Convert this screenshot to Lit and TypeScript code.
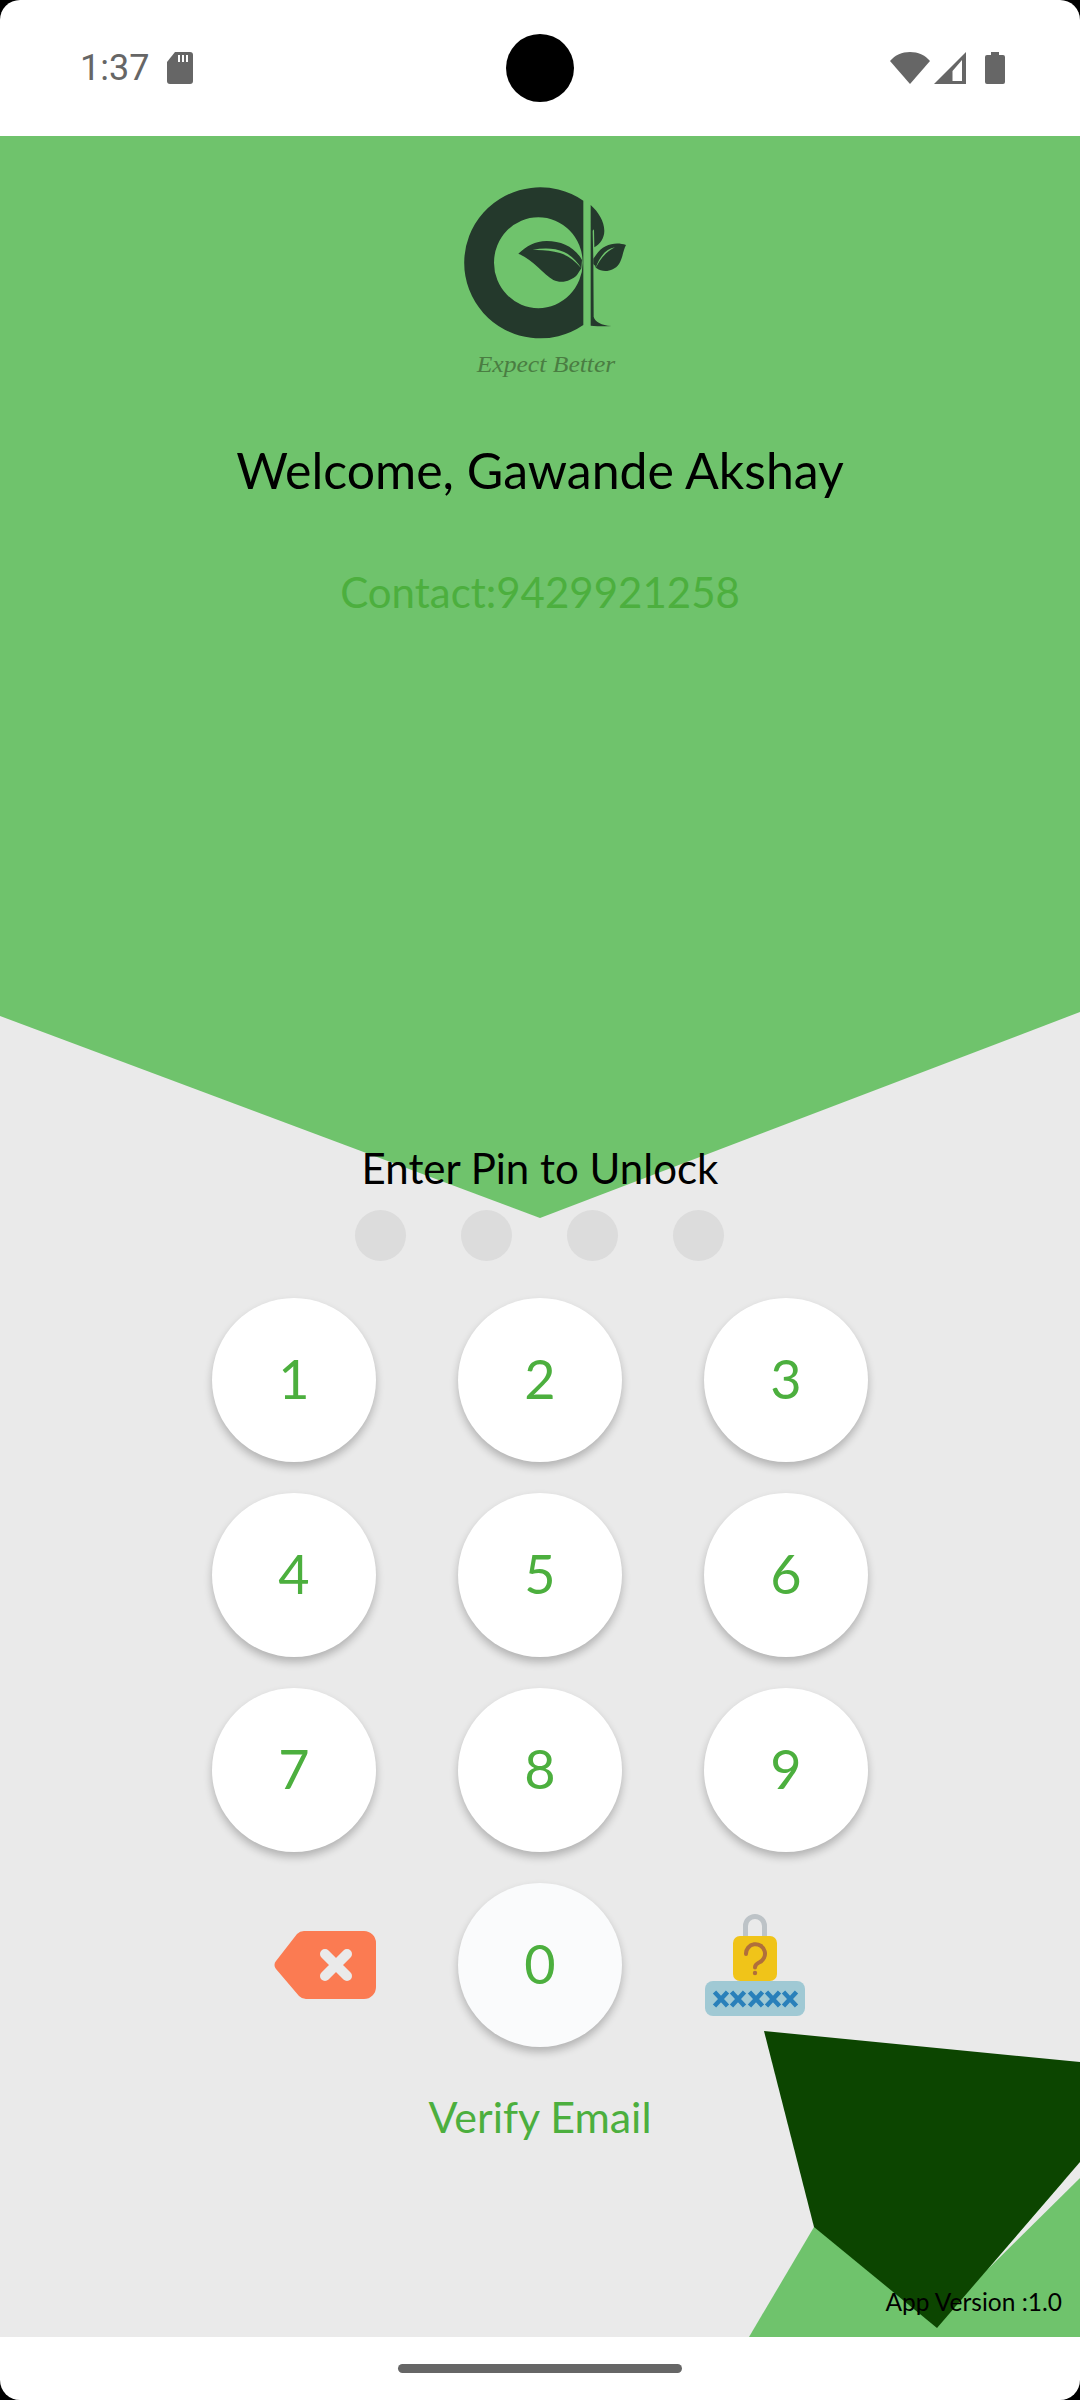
import { LitElement, css, html, svg } from 'lit'
import { customElement } from 'lit/decorators.js'

const KEYS = ['1', '2', '3', '4', '5', '6', '7', '8', '9']
const CROSSES = [16, 33, 51, 68, 85]

@customElement('app-root')
export class AppRoot extends LitElement {
  static styles = css`
    :host {
      display: block;
      position: relative;
      width: 1080px;
      height: 2400px;
      overflow: hidden;
      background: #fff;
      font-family: Lato, 'Noto Sans', sans-serif;
    }
    .status {
      display: flex;
      align-items: center;
      height: 136px;
      padding: 0 75px 0 80px;
      box-sizing: border-box;
      background: #fff;
      position: relative;
    }
    .time {
      font: 36px/1 Roboto, sans-serif;
      color: #666;
      margin-right: 18px;
    }
    .sd {
      display: block;
    }
    .cam {
      position: absolute;
      left: 506px;
      top: 34px;
      width: 68px;
      height: 68px;
      border-radius: 50%;
      background: #000;
    }
    .sys {
      margin-left: auto;
      display: flex;
      align-items: center;
      gap: 4px;
    }
    .sys svg {
      display: block;
    }
    .sys .batt {
      margin-left: 15px;
    }
    main {
      position: relative;
      height: 2201px;
      background: #eaeaea;
      display: flex;
      flex-direction: column;
      align-items: center;
      padding-top: 24px;
      box-sizing: border-box;
    }
    .bg {
      position: absolute;
      left: 0;
      top: 0;
    }
    main > *:not(.bg) {
      position: relative;
    }
    .logo {
      display: block;
    }
    .welcome {
      margin-top: 40px;
      font-size: 50px;
      line-height: 60px;
      color: #000;
    }
    .contact {
      margin-top: 62px;
      font-size: 42px;
      line-height: 60px;
      color: #4caf3e;
    }
    .enter {
      margin-top: 516px;
      font-size: 42px;
      line-height: 60px;
      color: #000;
    }
    .dots {
      display: flex;
      gap: 55px;
      margin-top: 12px;
      margin-left: -2px;
    }
    .dot {
      width: 51px;
      height: 51px;
      border-radius: 50%;
      background: #dcdcdc;
    }
    .pad {
      display: grid;
      grid-template-columns: repeat(3, 164px);
      grid-auto-rows: 164px;
      column-gap: 82px;
      row-gap: 31px;
      margin-top: 37px;
    }
    .key {
      display: flex;
      align-items: center;
      justify-content: center;
      box-sizing: border-box;
      padding-bottom: 3px;
      border-radius: 50%;
      background: #fff;
      box-shadow: 0 5px 8px rgba(0, 0, 0, 0.24);
      font-size: 54px;
      color: #4caf3e;
    }
    .key.zero {
      background: #fafbfc;
    }
    .back {
      justify-self: end;
      align-self: center;
      display: block;
    }
    .lock {
      justify-self: start;
      align-self: center;
      display: block;
      margin-left: 1px;
    }
    .verify {
      margin-top: 40px;
      font-size: 43px;
      line-height: 60px;
      color: #4caf3e;
    }
    main > .version {
      position: absolute;
      right: 18px;
      top: 2150px;
      font-size: 24.5px;
      line-height: 32px;
      color: #000;
    }
    .nav {
      height: 63px;
      display: flex;
      align-items: center;
      justify-content: center;
      background: #fff;
    }
    .pill {
      width: 284px;
      height: 9px;
      border-radius: 5px;
      background: #666;
    }
    .frame {
      position: absolute;
      inset: 0;
      border-radius: 20px;
      box-shadow: 0 0 0 40px #000;
      pointer-events: none;
    }
  `

  // drawn at 3x of the 240px box, same coords as a zoomed crop
  private logo() {
    return html`<svg class="logo" width="240" height="240" viewBox="0 0 720 720">
      <path fill="#24392c" fill-rule="evenodd" d="M490 122 A228 226.5 0 1 0 490 495 Z M355 171.5 A133 136.5 0 1 0 355 444.5 A133 136.5 0 1 0 355 171.5 Z" />
      <path fill="#24392c" d="M295 281 C320 258 345 243 380 243 C425 243 465 262 486 300 L484 325 L471 345 C455 362 425 372 400 360 C370 343 340 300 295 281 Z" />
      <path fill="#6fc36c" d="M338 270 C370 263 405 264 432 276 C455 287 472 305 484 325 C465 303 445 287 420 279 C395 271 365 269 338 270 Z" />
      <path fill="#24392c" d="M512 135 C535 155 553 185 553 212 C553 235 540 252 523 262 L522 208 L518 212 L520 300 L521 470 C524 485 545 496 574 498 C555 500 530 498 512 497 Z" />
      <path fill="#24392c" d="M618 255 C590 245 550 250 528 285 L520 296 L520 312 L526 318 C526 322 528 324 530 325 C548 338 580 336 597 312 C608 295 610 268 618 255 Z" />
      <path fill="#6fc36c" d="M585 262 C560 266 538 288 527 325 C540 296 560 274 585 262 Z" />
      <text x="170" y="635" font-family="'Liberation Serif', serif" font-style="italic" font-size="70" textLength="416" lengthAdjust="spacingAndGlyphs" fill="#4a7d42">Expect Better</text>
    </svg>`
  }

  private backspace() {
    return html`<svg class="back" width="102" height="68" viewBox="0 0 102 68">
      <path fill="#fb7b52" d="M30 0 H90 a12 12 0 0 1 12 12 V56 a12 12 0 0 1 -12 12 H32 a10 10 0 0 1 -7 -3 L2 38 a6 6 0 0 1 0 -8 L23 3 a10 10 0 0 1 7 -3 Z" />
      <path stroke="#eaeaea" stroke-width="10" stroke-linecap="round" d="M51 23 L73 45 M73 23 L51 45" />
    </svg>`
  }

  private lock() {
    return html`<svg class="lock" width="100" height="102" viewBox="0 0 100 102">
      <path fill="none" stroke="#bdc3c7" stroke-width="5" d="M40.5 24 V12 a9.5 9.5 0 0 1 19 0 V24" />
      <rect x="28" y="22" width="44" height="45" rx="7" fill="#f0c419" />
      <path fill="none" stroke="#b06f3b" stroke-width="4" stroke-linecap="round" d="M41 40 a9.5 9.5 0 1 1 13 8.5 c-3 1.5 -4 2.5 -4 5" />
      <circle cx="50" cy="59" r="2.2" fill="#b06f3b" />
      <rect x="0" y="67" width="100" height="35" rx="8" fill="#a0c9d4" />
      ${CROSSES.map(
        (x) => svg`<path stroke="#2980ba" stroke-width="4.5" d="M${x - 6.5} 78 l13 14 M${x + 6.5} 78 l-13 14" />`,
      )}
    </svg>`
  }

  protected render(): unknown {
    return html`
      <div class="status">
        <span class="time">1:37</span>
        <svg class="sd" width="26" height="32" viewBox="0 0 26 32">
          <path fill="#666" d="M8 0 H23 a3 3 0 0 1 3 3 V29 a3 3 0 0 1 -3 3 H3 a3 3 0 0 1 -3 -3 V10 Z" />
          <path fill="#fff" d="M11 3 h2 v7 h-2 Z M15 3 h2 v7 h-2 Z M19 3 h2 v7 h-2 Z" />
        </svg>
        <div class="cam"></div>
        <div class="sys">
          <svg width="40" height="32" viewBox="0 0 40 32">
            <path fill="#666" d="M0 9 C5 3 12 0 20 0 C28 0 35 3 40 9 L20 32 Z" />
          </svg>
          <svg width="32" height="32" viewBox="0 0 32 32">
            <path fill="#666" fill-rule="evenodd" d="M32 0 V32 H0 Z M28 8 L18.5 19 V29 H28 Z" />
          </svg>
          <svg class="batt" width="20" height="32" viewBox="0 0 20 32">
            <path fill="#666" d="M6 0 H14 V3 H18 a2 2 0 0 1 2 2 V30 a2 2 0 0 1 -2 2 H2 a2 2 0 0 1 -2 -2 V5 a2 2 0 0 1 2 -2 H6 Z" />
          </svg>
        </div>
      </div>
      <main>
        <svg class="bg" width="1080" height="2201" viewBox="0 136 1080 2201">
          <polygon fill="#6fc36c" points="0,136 1080,136 1080,1012 540,1218 0,1016" />
          <polygon fill="#6fc36c" points="814,2227 1080,2178 1080,2337 749,2337" />
          <polygon fill="#eaeaea" points="1080,2162 1080,2178 987,2270" />
          <polygon fill="#0c4500" points="764,2031 1080,2062 1080,2162 937,2328 814,2227" />
        </svg>
        ${this.logo()}
        <div class="welcome">Welcome, Gawande Akshay</div>
        <div class="contact">Contact:9429921258</div>
        <div class="enter">Enter Pin to Unlock</div>
        <div class="dots">
          <div class="dot"></div>
          <div class="dot"></div>
          <div class="dot"></div>
          <div class="dot"></div>
        </div>
        <div class="pad">
          ${KEYS.map((k) => html`<div class="key">${k}</div>`)}
          ${this.backspace()}
          <div class="key zero">0</div>
          ${this.lock()}
        </div>
        <div class="verify">Verify Email</div>
        <div class="version">App Version :1.0</div>
      </main>
      <div class="nav"><div class="pill"></div></div>
      <div class="frame"></div>
    `
  }
}
